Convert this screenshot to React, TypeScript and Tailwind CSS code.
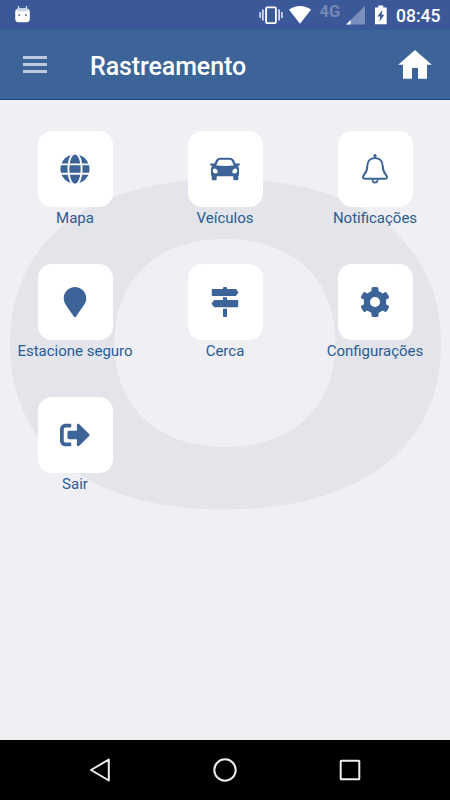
import React from "react";
import type { ComponentType } from "react";
import { FaGlobe, FaMapMarker, FaSignOutAlt } from "react-icons/fa";

type IconProps = { className?: string };

function CarIcon({ className }: IconProps) {
  return (
    <svg className={className} viewBox="0 0 30 30" fill="currentColor">
      <path
        fillRule="evenodd"
        d="M10.500 3.700H19.500C22.200 3.700 23.600 5 24.500 7.200L25.500 9.500H29.300Q30.200 9.700 29.900 10.500L29.500 11.300Q29.300 11.700 28.700 11.700H27.600Q29 13 29 15V20.500Q29 21.500 28.300 22V25Q28.300 26.200 27.100 26.200H24.500Q23.300 26.200 23.300 25V22.300H6.700V25Q6.700 26.200 5.500 26.200H2.900Q1.700 26.200 1.700 25V22Q1 21.500 1 20.500V15Q1 13 2.400 11.700H1.300Q0.700 11.700 0.500 11.300L0.100 10.500Q-0.200 9.700 0.700 9.500H4.500L5.500 7.200C6.400 5 7.800 3.700 10.500 3.700ZM10.800 5.800C9.200 5.800 8.300 6.400 7.700 7.900L6.300 11.500Q15 12.300 23.700 11.500L22.300 7.900C21.700 6.400 20.800 5.800 19.200 5.800ZM4.800 14.600C3.500 14.600 2.800 15.400 2.800 16.700S3.900 19.400 5.300 19.400C7 19.400 7.800 18.900 7.800 18C7.800 16.500 6.200 14.600 4.800 14.600ZM25.200 14.600C23.800 14.600 22.200 16.500 22.200 18C22.200 18.900 23 19.400 24.700 19.400C26.100 19.400 27.200 18 27.200 16.700S26.500 14.600 25.200 14.600Z"
      />
    </svg>
  );
}

function BellIcon({ className }: IconProps) {
  return (
    <svg className={className} viewBox="0 0 30 30" fill="none" stroke="currentColor" strokeWidth="2">
      <circle cx="15" cy="1.800" r="1.700" fill="currentColor" stroke="none" />
      <path d="M15 3.900C10.300 3.900 7.400 7.300 7.300 12C7.200 17 6.300 18.300 4.300 20.500C2.200 22.700 2.700 24.800 5 24.800H25C27.300 24.800 27.800 22.700 25.700 20.500C23.700 18.300 22.800 17 22.700 12C22.600 7.300 19.700 3.900 15 3.900Z" />
      <path d="M12.400 25.500Q12.400 28.700 15 28.700T17.600 25.500" strokeWidth="1.700" />
    </svg>
  );
}

function SignsIcon({ className }: IconProps) {
  return (
    <svg className={className} viewBox="0 0 30 30" fill="currentColor">
      <path d="M13 2V1Q13 0 14 0H16Q17 0 17 1V2H26L28.300 5Q28.600 5.400 28.300 5.800L25.800 9H2.600Q1.800 9 1.800 8.200V2.800Q1.800 2 2.600 2Z" />
      <path d="M13 13V10.300H17V13H27.400Q28.200 13 28.200 13.800V19.500Q28.200 20.300 27.400 20.300H4.200L1.700 17.100Q1.400 16.700 1.700 16.300L4.200 13Z" />
      <path d="M13 21.700H17V29Q17 30 16 30H14Q13 30 13 29Z" />
    </svg>
  );
}

function GearIcon({ className }: IconProps) {
  return (
    <svg className={className} viewBox="0 0 30 30" fill="currentColor">
      <defs>
        <mask id="gear-hole">
          <rect width="30" height="30" fill="#fff" />
          <circle cx="15" cy="15" r="5" fill="#000" />
        </mask>
      </defs>
      <g mask="url(#gear-hole)">
        <circle cx="15" cy="15" r="11.200" />
        {[0, 60, 120, 180, 240, 300].map((angle) => (
          <path
            key={angle}
            transform={`rotate(${angle} 15 15)`}
            d="M9.800 6.500Q11.500 5.500 11.500 3.500V1.300Q11.600 0.500 12.400 0.300Q15 -0.200 17.600 0.300Q18.400 0.500 18.500 1.300V3.500Q18.500 5.500 20.200 6.500Z"
          />
        ))}
      </g>
    </svg>
  );
}

const items: { label: string; icon: ComponentType<IconProps> }[] = [
  { label: "Mapa", icon: FaGlobe },
  { label: "Veículos", icon: CarIcon },
  { label: "Notificações", icon: BellIcon },
  { label: "Estacione seguro", icon: FaMapMarker },
  { label: "Cerca", icon: SignsIcon },
  { label: "Configurações", icon: GearIcon },
  { label: "Sair", icon: FaSignOutAlt },
];

function StatusBar() {
  return (
    <div className="flex h-[30px] items-center bg-[#3b5998] text-white">
      <svg className="ml-[14px] h-[18px] w-[17px]" viewBox="0 0 17 18">
        <path d="M4.200 -0.500 5.200 4M12.800 -0.500 11.800 4" stroke="#dce2ef" strokeWidth="1.200" />
        <rect x="1.200" y="2.500" width="14.600" height="13.800" rx="3.500" fill="#fff" />
        <path d="M2 4.800Q2.500 2.300 5 2.300H12Q14.500 2.300 15 4.800Q8.500 6 2 4.800Z" fill="#cdd5e8" />
        <rect x="4.300" y="8.200" width="1.800" height="1.800" fill="#6b80b2" />
        <rect x="11" y="8.200" width="1.800" height="1.800" fill="#6b80b2" />
      </svg>
      <svg className="ml-auto h-[30px] w-[130px]" viewBox="259 0 130 30">
        <g fill="none" stroke="#fff">
          <rect x="266.100" y="7.400" width="9.800" height="15.700" rx="1" strokeWidth="1.800" />
          <path d="M262.900 9.500V20.500M279.100 9.500V20.500" strokeWidth="1.400" />
          <path d="M260.100 12V18M281.900 12V18" strokeWidth="1.300" />
        </g>
        <path d="M289 9.700Q294 6 300 6T311 9.700L300 23.800Z" fill="#fff" />
        <text x="319.500" y="16.500" fontSize="16.500" fontWeight="700" fill="#7588b5" fontFamily="Roboto, sans-serif">4G</text>
        <path d="M365 5.800V24.500H346.200Z" fill="#7b8fbc" />
        <path d="M350.500 20V24.500H346.200Z" fill="#fff" />
        <path d="M378.300 5.500H383.200V7.500H386.700V24.200H375V7.500H378.300Z" fill="#fff" />
        <path d="M382.600 9.800 377.400 16.600H380.300L379.300 21.800 384.400 14.700H381.600Z" fill="#3b5998" />
      </svg>
      <span className="ml-[7px] mr-[9px] w-[45px] whitespace-nowrap pt-[2px] text-[17.5px] font-medium leading-[28px]">08:45</span>
    </div>
  );
}

function Header() {
  return (
    <header className="flex h-[70px] items-center border-b border-[#164d86] bg-[#3c6498] text-white">
      <div className="ml-[23px] flex w-6 flex-col gap-[4px]">
        <span className="h-[3px] bg-[#bdcadd]" />
        <span className="h-[3px] bg-[#bdcadd]" />
        <span className="h-[3px] bg-[#bdcadd]" />
      </div>
      <h1 className="ml-[43px] pt-[4px] text-[25px] font-medium leading-8 tracking-[-0.1px]">Rastreamento</h1>
      <svg className="ml-auto mr-[18px] h-[29px] w-[34px]" viewBox="0 0 34 29" fill="#fff">
        <path d="M17 0 33.800 14.800H29V28.700H20V18H14V28.700H5V14.800H0.200Z" />
      </svg>
    </header>
  );
}

export default function App() {
  return (
    <div className="flex h-[800px] w-[450px] flex-col overflow-hidden bg-[#efeff4] font-[Roboto,sans-serif]">
      <StatusBar />
      <Header />
      <main className="relative flex-1">
        <svg className="absolute inset-0 h-[640px] w-[450px]" viewBox="0 100 450 640">
          <path
            fill="#e4e5ea"
            fillRule="evenodd"
            d="M10 344C10 240 90 179 225 179S441 240 441 344 360 509.500 225 509.500 10 448 10 344ZM114.500 343C114.500 280 156 239 225 239S335.500 280 335.500 343 294 447 225 447 114.500 406 114.500 343Z"
          />
        </svg>
        <div className="relative grid grid-cols-3 gap-y-[34px] pt-[31px]">
          {items.map(({ label, icon: Icon }) => (
            <div key={label} className="flex h-[99px] flex-col items-center">
              <div className="flex h-[76px] w-[75px] shrink-0 items-center justify-center rounded-[14px] bg-white">
                <Icon className="h-[30px] w-[30px] text-[#3c6498]" />
              </div>
              <span className="whitespace-nowrap text-[15px] leading-[22px] text-[#295c94]">{label}</span>
            </div>
          ))}
        </div>
      </main>
      <nav className="flex h-[60px] items-center bg-black">
        <svg className="h-[60px] w-[450px]" viewBox="0 740 450 60" fill="none" stroke="#eee" strokeWidth="2">
          <path d="M91 770 108.800 759.500V780.500Z" strokeLinejoin="round" />
          <circle cx="225" cy="770" r="10.700" />
          <rect x="340.700" y="760.700" width="18.600" height="18.600" rx="0.500" />
        </svg>
      </nav>
    </div>
  );
}
